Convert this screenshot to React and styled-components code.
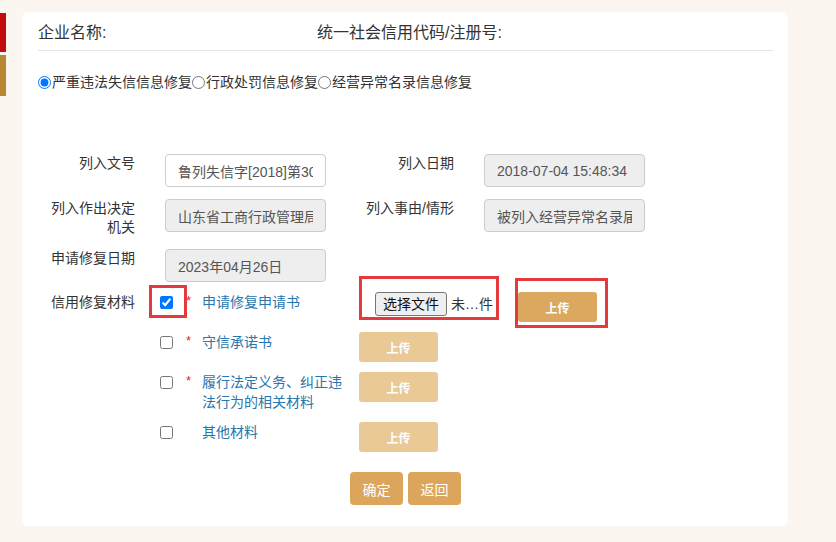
import React from "react";
import styled, { createGlobalStyle } from "styled-components";

//styled ------------------------------------
const GlobalStyle = createGlobalStyle`
  body {
    margin: 0;
    background-color: #fbf7f0;
    font-family: "Liberation Sans", "Noto Sans CJK SC", sans-serif;
    color: #333;
  }
`;

const PageDiv = styled.div`
  display: flex;
  flex-direction: row;
  align-items: flex-start;
  width: 836px;
  height: 542px;
`;

const SideTabs = styled.div`
  display: flex;
  flex-direction: column;
  gap: 3px;
  margin-top: 13px;
  width: 6px;
`;

const SideTab = styled.div`
  height: ${(p) => p.$h}px;
  background-color: ${(p) => p.$color};
`;

const CardDiv = styled.div`
  margin: 12px 0 0 16px;
  width: 735px;
  height: 514px;
  padding: 0 15px 0 16px;
  background-color: #fff;
  border-radius: 6px;
`;

const HeaderDiv = styled.div`
  display: flex;
  padding-top: 9px;
  height: 29px;
  border-bottom: 1px solid #e3e3e3;
  font-size: 16px;
  line-height: 24px;
`;

const HeaderCell = styled.span`
  width: ${(p) => p.$w || "auto"};
`;

const RadioRow = styled.div`
  display: flex;
  align-items: center;
  margin-top: 21px;
  font-size: 14px;
  line-height: 20px;
`;

const RadioLabel = styled.label`
  display: flex;
  align-items: center;
`;

const RadioInput = styled.input`
  width: 13px;
  height: 13px;
  margin: 0 1px 0 0;
  accent-color: #0075ff;
`;

const FormGrid = styled.div`
  display: grid;
  grid-template-columns: 97px 30px 161px 128px 30px 161px;
  row-gap: 12px;
  margin-top: 62px;
`;

const FieldLabel = styled.div`
  grid-column: ${(p) => p.$col};
  font-size: 14px;
  line-height: 19px;
  text-align: right;
  color: #333;
`;

const FieldInput = styled.input`
  grid-column: ${(p) => p.$col};
  box-sizing: border-box;
  width: 161px;
  height: 33px;
  padding: 0 12px;
  border: 1px solid #ccc;
  border-radius: 4px;
  font-family: inherit;
  font-size: 14px;
  color: #555;
  background-color: ${(p) => (p.$gray ? "#eee" : "#fff")};
  outline: none;
`;

const MaterialList = styled.div`
  display: flex;
  flex-direction: column;
  gap: 10px;
  margin-top: 10px;
`;

const MaterialRow = styled.div`
  display: flex;
  align-items: flex-start;
  font-size: 14px;
  line-height: 20px;
`;

const MaterialLabel = styled.div`
  width: 97px;
  text-align: right;
  color: #333;
`;

const CheckWrap = styled.span`
  position: relative;
  display: flex;
  margin: 4px 0 0 25px;
`;

const CheckInput = styled.input`
  width: 13px;
  height: 13px;
  margin: 0;
  accent-color: #0075ff;
`;

const Star = styled.span`
  width: 16px;
  margin-left: 13px;
  color: #e0292b;
  font-size: 13px;
  line-height: 18px;
`;

const MaterialName = styled.span`
  width: 145px;
  color: #2776ae;
`;

const ActionArea = styled.div`
  display: flex;
  align-items: flex-start;
  margin-left: 12px;
`;

const FileWidget = styled.div`
  position: relative;
  display: flex;
  align-items: center;
  width: 124px;
  height: 24px;
  padding-left: 16px;
  font-size: 14px;
  color: #333;
`;

const FileButton = styled.span`
  box-sizing: border-box;
  width: 72px;
  height: 24px;
  margin-right: 4px;
  border: 1px solid #767676;
  border-radius: 3px;
  background-color: #efefef;
  color: #111;
  text-align: center;
  line-height: 22px;
`;

const UploadWrap = styled.span`
  position: relative;
  display: flex;
  margin-left: ${(p) => p.$ml || 0}px;
`;

const UploadButton = styled.button`
  width: 79px;
  height: 30px;
  border: none;
  border-radius: 3px;
  background-color: ${(p) => (p.$active ? "#dca85f" : "#e9c995")};
  color: #fff;
  font-family: inherit;
  font-size: 12px;
  font-weight: bold;
  cursor: pointer;
`;

// 截图上的红色标注框
const Mark = styled.span`
  position: absolute;
  top: ${(p) => p.$t}px;
  left: ${(p) => p.$l}px;
  right: ${(p) => p.$r}px;
  bottom: ${(p) => p.$b}px;
  border: 3px solid #e53a3d;
  pointer-events: none;
`;

const FooterDiv = styled.div`
  display: flex;
  justify-content: center;
  gap: 5px;
  margin-top: 20px;
`;

const FooterButton = styled.button`
  width: 53px;
  height: 33px;
  border: none;
  border-radius: 4px;
  background-color: #dca55c;
  color: #fff;
  font-family: inherit;
  font-size: 14px;
`;

const materials = [
  { name: "守信承诺书", required: true },
  { name: "履行法定义务、纠正违法行为的相关材料", required: true },
  { name: "其他材料", required: false },
];

function App() {
  return (
    <>
      <GlobalStyle />
      <PageDiv>
        <SideTabs>
          <SideTab $h={39} $color="#c40c0c" />
          <SideTab $h={41} $color="#bb8631" />
        </SideTabs>
        <CardDiv>
          <HeaderDiv>
            <HeaderCell $w="279px">企业名称:</HeaderCell>
            <HeaderCell>统一社会信用代码/注册号:</HeaderCell>
          </HeaderDiv>

          <RadioRow>
            <RadioLabel>
              <RadioInput type="radio" name="kind" defaultChecked />
              严重违法失信信息修复
            </RadioLabel>
            <RadioLabel>
              <RadioInput type="radio" name="kind" />
              行政处罚信息修复
            </RadioLabel>
            <RadioLabel>
              <RadioInput type="radio" name="kind" />
              经营异常名录信息修复
            </RadioLabel>
          </RadioRow>

          <FormGrid>
            <FieldLabel $col={1}>列入文号</FieldLabel>
            <FieldInput $col={3} readOnly value="鲁列失信字[2018]第3011号" />
            <FieldLabel $col={4}>列入日期</FieldLabel>
            <FieldInput $col={6} $gray readOnly value="2018-07-04 15:48:34" />

            <FieldLabel $col={1}>
              列入作出决定
              <br />
              机关
            </FieldLabel>
            <FieldInput $col={3} $gray readOnly value="山东省工商行政管理局" />
            <FieldLabel $col={4}>列入事由/情形</FieldLabel>
            <FieldInput $col={6} $gray readOnly value="被列入经营异常名录届满3年" />

            <FieldLabel $col={1}>申请修复日期</FieldLabel>
            <FieldInput $col={3} $gray readOnly value="2023年04月26日" />
          </FormGrid>

          <MaterialList>
            <MaterialRow>
              <MaterialLabel>信用修复材料</MaterialLabel>
              <CheckWrap>
                <CheckInput type="checkbox" defaultChecked />
                <Mark $t={-11} $l={-11} $r={-14} $b={-9} />
              </CheckWrap>
              <Star>*</Star>
              <MaterialName>申请修复申请书</MaterialName>
              <ActionArea>
                <FileWidget>
                  <FileButton>选择文件</FileButton>
                  未…件
                  <Mark $t={-16} $l={0} $r={0} $b={-4} />
                </FileWidget>
                <UploadWrap $ml={19}>
                  <UploadButton $active>上传</UploadButton>
                  <Mark $t={-14} $l={-3} $r={-11} $b={-6} />
                </UploadWrap>
              </ActionArea>
            </MaterialRow>

            {materials.map((m) => (
              <MaterialRow key={m.name}>
                <MaterialLabel />
                <CheckWrap>
                  <CheckInput type="checkbox" />
                </CheckWrap>
                <Star>{m.required ? "*" : ""}</Star>
                <MaterialName>{m.name}</MaterialName>
                <ActionArea>
                  <UploadWrap>
                    <UploadButton>上传</UploadButton>
                  </UploadWrap>
                </ActionArea>
              </MaterialRow>
            ))}
          </MaterialList>

          <FooterDiv>
            <FooterButton>确定</FooterButton>
            <FooterButton>返回</FooterButton>
          </FooterDiv>
        </CardDiv>
      </PageDiv>
    </>
  );
}

export default App;
